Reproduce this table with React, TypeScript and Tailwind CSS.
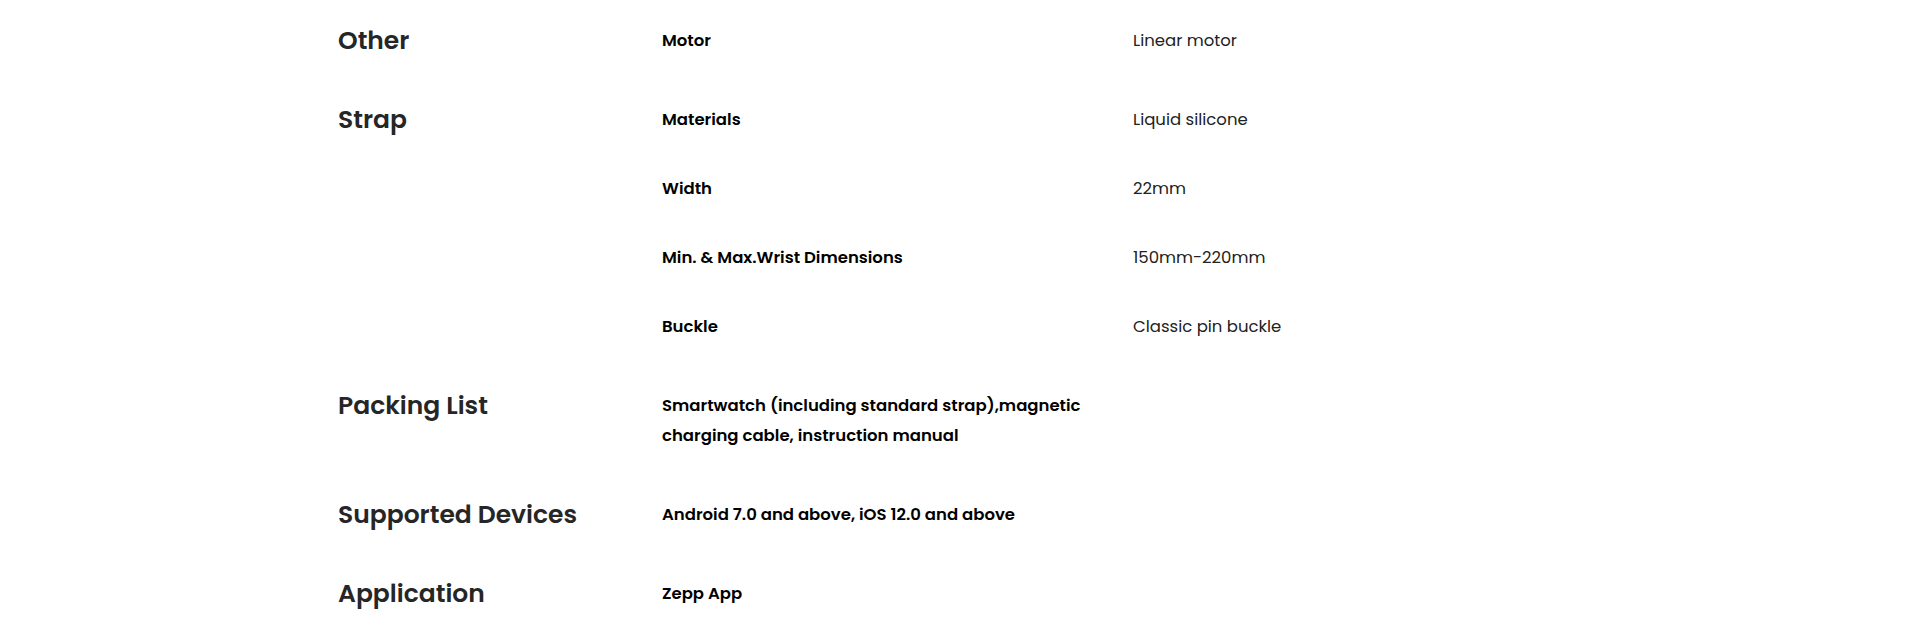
import React from 'react';

type Spec = { label: string; value?: string };
type Section = { title: string; rows: Spec[] };

const sections: Section[] = [
  { title: 'Other', rows: [{ label: 'Motor', value: 'Linear motor' }] },
  {
    title: 'Strap',
    rows: [
      { label: 'Materials', value: 'Liquid silicone' },
      { label: 'Width', value: '22mm' },
      { label: 'Min. & Max.Wrist Dimensions', value: '150mm-220mm' },
      { label: 'Buckle', value: 'Classic pin buckle' },
    ],
  },
  {
    title: 'Packing List',
    rows: [{ label: 'Smartwatch (including standard strap),magnetic charging cable, instruction manual' }],
  },
  { title: 'Supported Devices', rows: [{ label: 'Android 7.0 and above, iOS 12.0 and above' }] },
  { title: 'Application', rows: [{ label: 'Zepp App' }] },
];

export default function App() {
  return (
    <div className="min-h-[637px] w-full bg-white font-['Poppins','Open_Sans',sans-serif]">
      <div className="ml-[338px] flex w-[1244px] flex-col gap-[10px] pt-[6.5px]">
        {sections.map((s) => (
          <div key={s.title} className="flex">
            {/* section heading */}
            <div className="w-[324px] shrink-0 py-[19.5px]">
              <h3 className="text-[25px] font-semibold leading-[30px] text-[#262626]">{s.title}</h3>
            </div>
            <div className="flex-1">
              {s.rows.map((r) => (
                <div key={r.label} className="flex py-[19.5px]">
                  <div className="w-[471px] shrink-0 pr-[30px] text-[16.5px] font-semibold leading-[30px] text-black">
                    {r.label}
                  </div>
                  {r.value && (
                    <div className="text-[16.5px] leading-[30px] text-[#222]">{r.value}</div>
                  )}
                </div>
              ))}
            </div>
          </div>
        ))}
      </div>
    </div>
  );
}
